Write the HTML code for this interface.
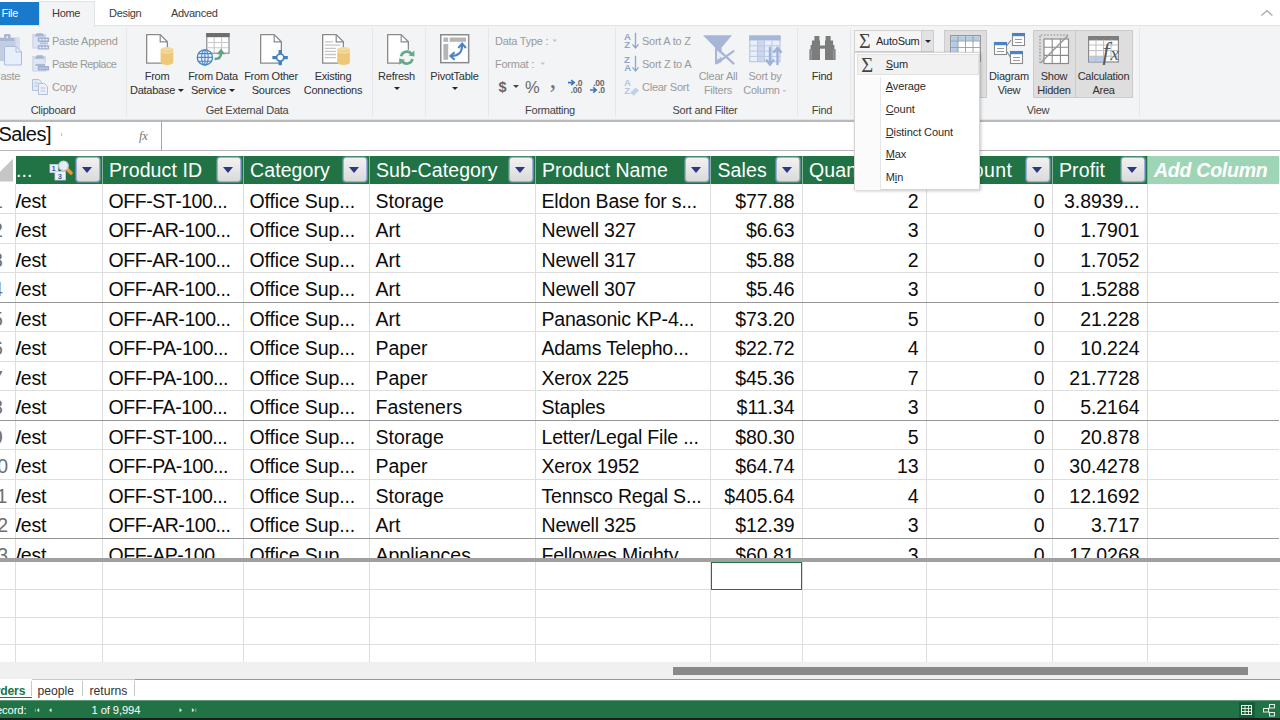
<!DOCTYPE html>
<html lang="en">
<head>
<meta charset="utf-8">
<title>Power Pivot for Excel</title>
<style>
*{box-sizing:border-box;margin:0;padding:0}
html,body{width:1280px;height:720px;overflow:hidden;background:#fff}
body{position:relative;font-family:"Liberation Sans",sans-serif;color:#262626}
.abs{position:absolute}
/* ---------- tabs ---------- */
#tabs{position:absolute;left:0;top:0;width:1280px;height:26px;background:#fff}
#tabs .tab{position:absolute;top:0;height:27px;line-height:27px;font-size:11px;letter-spacing:-.3px;color:#3b3b3b;white-space:nowrap}
#filetab{position:absolute;left:0;top:1.5px;width:38.5px;height:23.2px;background:#1979ca;color:#fff;font-size:11px;letter-spacing:-.3px;line-height:23px;padding-left:1.5px}
#hometab{position:absolute;left:38.5px;top:1px;width:56px;height:26px;background:#f3f4f6;border:1px solid #e1e2e3;border-bottom:none;z-index:3}
/* ---------- ribbon ---------- */
#ribbon{position:absolute;left:0;top:25px;width:1280px;height:94.5px;background:#f3f4f6;border-top:1px solid #e1e2e3}
#ribbon-line{position:absolute;left:0;top:119.3px;width:1280px;height:2.5px;background:linear-gradient(#e6e6e6 0,#e0e0e0 45%,#b9b9b9 50%,#b9b9b9 100%)}
.sep{position:absolute;top:28px;height:88px;width:1px;background:#e6e7e9}
.gl{position:absolute;top:103px;height:14px;line-height:14px;font-size:11px;letter-spacing:-.28px;color:#444;text-align:center;white-space:nowrap;transform:translateX(-50%)}
.bl{position:absolute;font-size:11px;letter-spacing:-.25px;line-height:14px;color:#303030;text-align:center;white-space:nowrap;transform:translateX(-50%)}
.bl.dis,.sl.dis{color:#9a9a9a}
.sl{position:absolute;font-size:11px;letter-spacing:-.25px;line-height:14px;color:#262626;white-space:nowrap}
.ico{position:absolute;overflow:visible}
.dd{display:inline-block;width:0;height:0;border-left:3px solid transparent;border-right:3px solid transparent;border-top:3.5px solid #262626;vertical-align:middle;margin-left:3px;margin-bottom:1px}
.dd.dis{border-top-color:#b5b5b5}
.ddc{position:absolute;width:0;height:0;border-left:3px solid transparent;border-right:3px solid transparent;border-top:3.5px solid #262626}
/* ---------- formula bar ---------- */
#fbar{position:absolute;left:0;top:121.5px;width:1280px;height:29.5px;background:#fff;border-bottom:1.2px solid #b9b9b9}
#namebox{position:absolute;left:-1.6px;top:122.4px;font-size:20px;line-height:24px;color:#111;letter-spacing:-.5px}
#fx{position:absolute;left:139px;top:127.5px;font-family:"Liberation Serif",serif;font-style:italic;font-size:12.5px;color:#777;line-height:16px;letter-spacing:-.3px}
#fbar-div{position:absolute;left:160.8px;top:121.5px;width:1.2px;height:29px;background:#a6a6a6}
/* ---------- grid ---------- */
#grid{position:absolute;left:0;top:152px;width:1280px;height:510px;background:#fff;overflow:hidden}
.hc{position:absolute;top:155.5px;height:28.5px;background:#217346;color:#fff;font-size:19.5px;letter-spacing:.1px;line-height:28.5px;white-space:nowrap;overflow:hidden}
.hc .ht{position:absolute;left:7px;top:0}
.hc.add{background:#9fd5b7;border-right:none;font-style:italic;font-weight:bold;letter-spacing:-.25px}
.fb{position:absolute;right:2px;top:1.8px;width:24px;height:24.4px;border:1.2px solid #9fade0;border-radius:2.8px;background:linear-gradient(#f1f1f1,#e6e6e6 50%,#dadada);box-shadow:0 0 0 .6px rgba(190,200,235,.55)}
.fb i{position:absolute;left:5.4px;top:9px;width:0;height:0;border-left:5.3px solid transparent;border-right:5.3px solid transparent;border-top:6.2px solid #2c3787}
.row{position:absolute;left:0;width:1279px;height:29.5px;border-bottom:1px solid #dedede}
.row .c{position:absolute;top:0;height:29.5px;line-height:32.4px;font-size:19.5px;letter-spacing:-.25px;color:#0c0c0c;white-space:nowrap;overflow:hidden;padding-left:6.5px}
.row .c.r{text-align:right;padding-left:0;padding-right:7.5px;letter-spacing:-.05px}
.row .c.west{padding-left:0;text-indent:-13px}
.row .rn{position:absolute;left:-20.8px;width:36.3px;top:0;height:28.5px;line-height:32.4px;background:#fff;text-align:center;font-size:19.5px;letter-spacing:-.2px;color:#6f6f6f;overflow:hidden}
.vl{position:absolute;top:184px;width:1px;height:478px;background:#dedede}
.hl{position:absolute;left:0;width:1279px;height:1px;background:#dedede}
.gb{position:absolute;left:0;width:1279px;height:1.3px;background:#969696}
</style>
<style>
/* ---------- menu ---------- */
#menu{position:absolute;left:854.2px;top:52.3px;width:126.3px;height:138px;background:#fff;border:1px solid #d4d4d4;box-shadow:1px 1px 3px rgba(0,0,0,.22);z-index:20}
#menu .mi{position:absolute;left:1.5px;width:122.3px;height:21.5px;font-size:11px;letter-spacing:-.08px;line-height:21px;color:#2b2b2b;white-space:nowrap}
#menu .mi.hot{background:#f1f1f1;border:1px solid #e0e0e0}
#menu .mt{position:absolute;left:29px;top:0}
#menu .mi.hot .mt{left:28px;top:-1px}
#menu .sig{position:absolute;left:3.5px;top:-1px;font-size:20.5px;line-height:22px;color:#444;font-family:"Liberation Serif",serif}
#menu .gut{position:absolute;left:0;top:23.5px;width:25.6px;height:113px;background:#fbfbfb;border-right:1px solid #e6e6e6}
/* ---------- footer ---------- */
#hscroll{position:absolute;left:0;top:662px;width:1280px;height:17.5px;background:#f0f0f0}
#thumb{position:absolute;left:673px;top:5px;width:575px;height:7.5px;background:#898989}
#sheetbar{position:absolute;left:0;top:679px;width:1280px;height:21px;background:#fff}
#sheetbar .tl{position:absolute;top:0;height:1.2px}
#sheetbar .st{position:absolute;top:3px;height:18px;line-height:18px;font-size:12.2px;color:#333;white-space:nowrap}
#sheetbar .st.act{left:-11.5px;width:43px;top:0;height:19.2px;line-height:25.5px;padding-left:0;letter-spacing:-.2px;background:#fff;color:#217346;font-weight:bold;border-bottom:1.5px solid #217346}
#sheetbar .stsep{position:absolute;top:2px;width:1px;height:15px;background:#c8c8c8}
#status{position:absolute;left:0;top:700px;width:1280px;height:17.5px;background:#217346;border-top:1px solid #5d9c79}
#status .sx{position:absolute;top:1.5px;font-size:11.2px;letter-spacing:-.1px;line-height:14px;color:#fff;white-space:nowrap}
#bottomline{position:absolute;left:0;top:717.5px;width:1280px;height:3px;background:#1c1c1c}
</style>
</head>
<body>
<div id="tabs">
  <div id="filetab">File</div>
  <div id="hometab"></div>
  <div class="tab" style="left:52px;z-index:4">Home</div>
  <div class="tab" style="left:109px">Design</div>
  <div class="tab" style="left:171px">Advanced</div>
  <svg class="ico" style="left:1260px;top:9px" width="14" height="8" viewBox="0 0 14 8"><path d="M1.4 6.6 L6.9 1.7 L12.4 6.6" fill="none" stroke="#acacac" stroke-width="1.3"/></svg>
</div>
<div id="ribbon"></div>
<div id="ribbon-line"></div>

<!-- ===== Clipboard ===== -->
<svg class="ico" style="left:-8px;top:33px" width="32" height="34" viewBox="0 0 32 34"><rect x="0" y="4.5" width="27.5" height="23.5" rx="1" fill="#c4cee3"/><rect x="23.5" y="4.5" width="4" height="23.5" fill="#d6ddec"/><rect x="0" y="5" width="22" height="3" fill="#aab7d4"/><rect x="12" y="1" width="6.5" height="6" rx="1.2" fill="#aab7d4"/><circle cx="15.2" cy="4.2" r="1" fill="#e9eef8"/><path d="M12.5 13.5 H24 L29.5 19 V32 H12.5 Z" fill="#e8effc" stroke="#aebcdc" stroke-width="1"/><path d="M24 13.5 V19 H29.5" fill="none" stroke="#aebcdc" stroke-width="1"/></svg>
<div class="bl dis" style="left:6.8px;top:69px">Paste</div>

<svg class="ico" style="left:32px;top:33px" width="18" height="17" viewBox="0 0 18 17"><rect x=".2" y="1" width="13.8" height="14.6" fill="#ced8ea"/><rect x="1.6" y="3.4" width="11" height="11" fill="#dde4f2"/><path d="M3 3.6 L4.6 .3 H10.8 L12.4 3.6 Z" fill="#a7b5d3"/><rect x="5.8" y="4.6" width="11.3" height="4.3" rx=".6" fill="#9fb0d3"/><rect x="8" y="9.4" width="8" height="2" fill="#b9c6e0"/><rect x="5.8" y="12.2" width="11.3" height="4.4" rx=".6" fill="#9fb0d3"/><path d="M7.4 6.75h2M10.5 6.75h2M13.6 6.75h2M7.4 14.4h2M10.5 14.4h2M13.6 14.4h2" stroke="#eef2fa" stroke-width="1.5"/></svg>
<div class="sl dis" style="left:52px;top:34px">Paste Append</div>
<svg class="ico" style="left:32px;top:55px" width="18" height="17" viewBox="0 0 18 17"><rect x=".2" y="1" width="13.8" height="15.6" fill="#ced8ea"/><rect x="1.6" y="3.6" width="11" height="12" fill="#dde4f2"/><path d="M3 3.8 L4.6 .3 H10.8 L12.4 3.8 Z" fill="#a7b5d3"/><rect x="2.9" y="8.2" width="10.6" height="3.4" fill="#aab9d7" stroke="#eef2fa" stroke-width=".9"/><rect x="5.8" y="11" width="11.3" height="4.6" rx=".6" fill="#9fb0d3"/><path d="M7.4 13.3h2M10.5 13.3h2M13.6 13.3h2" stroke="#c9d3e8" stroke-width="1.6"/></svg>
<div class="sl dis" style="left:52px;top:57px;letter-spacing:-.55px">Paste Replace</div>
<svg class="ico" style="left:32px;top:79px" width="17" height="16" viewBox="0 0 17 16">
  <path d="M0.5 0.5 H7 L9.5 3 V11.5 H0.5 Z" fill="#e3e9f5" stroke="#b3c0da"/>
  <path d="M6.5 4.5 H12.5 L15.5 7.5 V15.5 H6.5 Z" fill="#eef2fa" stroke="#b3c0da"/>
  <path d="M2.5 4h3M2.5 7h3M8.5 9h5M8.5 12h5" stroke="#b3c0da" stroke-width="1"/>
</svg>
<div class="sl dis" style="left:52px;top:80px">Copy</div>
<div class="gl" style="left:53px">Clipboard</div>
<div class="sep" style="left:126px"></div>

<!-- ===== Get External Data ===== -->
<svg class="ico" style="left:146.4px;top:34px" width="30" height="33" viewBox="0 0 30 33"><path d="M.65 .65 H14.2 L21.35 7.8 V29.2 H.65 Z" fill="#fff" stroke="#8a8a8a" stroke-width="1.3" stroke-linejoin="round"/><path d="M14.2 .65 V7.8 H21.35" fill="none" stroke="#8a8a8a" stroke-width="1.2"/><path d="M14.6 15.2 V28.8 A6.3500000000000005 2.2 0 0 0 27.3 28.8 V15.2 Z" fill="#eec878"/><ellipse cx="20.95" cy="15.2" rx="6.3500000000000005" ry="2.2" fill="#f4d998"/><path d="M14.6 16.8 A6.3500000000000005 2.2 0 0 0 27.3 16.8" fill="none" stroke="#f9ebc8" stroke-width=".8"/></svg>
<div class="bl" style="left:157px;top:69px">From</div>
<div class="bl" style="left:157px;top:83px">Database<i class="dd"></i></div>

<svg class="ico" style="left:196px;top:33px" width="34" height="34" viewBox="0 0 34 34"><rect x="10.8" y="0.6" width="22.2" height="19.6" fill="#fff" stroke="#8c8c8c" stroke-width="1.2"/><rect x="10.2" y="0" width="23.4" height="4.2" fill="#6e6e6e"/><path d="M11.4 9.5h21M11.4 14.8h21M18.2 4.2v15.4M25.6 4.2v15.4" stroke="#c9c9c9" stroke-width="1.1"/><circle cx="8.9" cy="24.4" r="7.6" fill="#eef3fb" stroke="#4a86c8" stroke-width="1.3"/><ellipse cx="8.9" cy="24.4" rx="3.3" ry="7.6" fill="none" stroke="#4a86c8" stroke-width="1.1"/><path d="M1.3 24.4h15.2M2.5 20.6h12.8M2.5 28.2h12.8M8.9 16.8v15.2" stroke="#4a86c8" stroke-width="1.1"/><path d="M18.6 26 C23 26 25 24 25 20.5" fill="none" stroke="#5fa585" stroke-width="2.5"/><path d="M20.8 21.2 L25 15.4 L29.2 21.2 Z" fill="#5fa585"/></svg>
<div class="bl" style="left:213px;top:69px">From Data</div>
<div class="bl" style="left:213px;top:83px">Service<i class="dd"></i></div>

<svg class="ico" style="left:259.9px;top:34px" width="30" height="33" viewBox="0 0 30 33"><path d="M.65 .65 H14.2 L21.35 7.8 V29.2 H.65 Z" fill="#fff" stroke="#8a8a8a" stroke-width="1.3" stroke-linejoin="round"/><path d="M14.2 .65 V7.8 H21.35" fill="none" stroke="#8a8a8a" stroke-width="1.2"/><g fill="#3f7fc1"><rect x="18.6" y="16" width="3.2" height="4"/><rect x="18.6" y="27.2" width="3.2" height="4"/><rect x="12.4" y="22" width="4" height="3.2"/><rect x="23.8" y="22" width="4" height="3.2"/></g><circle cx="20.2" cy="23.6" r="3.6" fill="#fff" stroke="#3f7fc1" stroke-width="1.7"/></svg>
<div class="bl" style="left:271px;top:69px">From Other</div>
<div class="bl" style="left:271px;top:83px">Sources</div>

<svg class="ico" style="left:322px;top:34px" width="30" height="33" viewBox="0 0 30 33"><path d="M.65 .65 H14.2 L21.35 7.8 V29.2 H.65 Z" fill="#fff" stroke="#8a8a8a" stroke-width="1.3" stroke-linejoin="round"/><path d="M14.2 .65 V7.8 H21.35" fill="none" stroke="#8a8a8a" stroke-width="1.2"/><path d="M2.8 7.8h8.2M2.8 11.2h15.5M2.8 14.4h11.2M2.8 17.4h11.2M2.8 20.5h11.2M2.8 23.7h11.2" stroke="#c6c6c6" stroke-width="1.3"/><path d="M15.2 15.2 V28.8 A6.35 2.2 0 0 0 27.9 28.8 V15.2 Z" fill="#eec878"/><ellipse cx="21.549999999999997" cy="15.2" rx="6.35" ry="2.2" fill="#f4d998"/><path d="M15.2 16.8 A6.35 2.2 0 0 0 27.9 16.8" fill="none" stroke="#f9ebc8" stroke-width=".8"/></svg>
<div class="bl" style="left:333px;top:69px">Existing</div>
<div class="bl" style="left:333px;top:83px">Connections</div>
<div class="gl" style="left:247px">Get External Data</div>
<div class="sep" style="left:372px"></div>

<!-- ===== Refresh ===== -->
<svg class="ico" style="left:386.6px;top:34px" width="30" height="33" viewBox="0 0 30 33"><path d="M.65 .65 H14.2 L21.35 7.8 V29.2 H.65 Z" fill="#fff" stroke="#8a8a8a" stroke-width="1.3" stroke-linejoin="round"/><path d="M14.2 .65 V7.8 H21.35" fill="none" stroke="#8a8a8a" stroke-width="1.2"/><circle cx="19.8" cy="23.6" r="8" fill="#f3f4f6"/><g fill="none" stroke="#66a98a" stroke-width="2.6"><path d="M14.1 22.2 A5.8 5.8 0 0 1 24.6 20.2"/><path d="M25.5 25 A5.8 5.8 0 0 1 15 27"/></g><path d="M21.6 21.4 L27.4 16.4 L27.4 22.6 Z" fill="#66a98a"/><path d="M18 25.8 L12.2 30.8 L12.2 24.6 Z" fill="#66a98a"/></svg>
<div class="bl" style="left:396.5px;top:69px">Refresh</div>
<i class="ddc" style="left:393.5px;top:87.2px"></i>
<div class="sep" style="left:425px"></div>

<!-- ===== PivotTable ===== -->
<svg class="ico" style="left:440.1px;top:34px" width="30" height="30" viewBox="0 0 30 30"><rect x=".75" y=".75" width="27.9" height="27.9" fill="#fff" stroke="#8a8a8a" stroke-width="1.5"/><rect x="3.4" y="3.5" width="4.8" height="4.3" fill="#b5b5b5"/><rect x="9.7" y="3.5" width="16.3" height="4.3" fill="#b5b5b5"/><rect x="3.4" y="10" width="4.8" height="15.8" fill="#b5b5b5"/><g fill="none" stroke="#4a84c2" stroke-width="2.1"><path d="M11.5 22 C18.5 22 22.1 18.5 22.1 11"/><path d="M18.3 14 L22.1 9.6 L25.9 14"/><path d="M14.6 18.2 L10.4 22 L14.6 25.8"/></g></svg>
<div class="bl" style="left:454.5px;top:69px">PivotTable</div>
<i class="ddc" style="left:451.5px;top:87.2px"></i>
<div class="sep" style="left:488px"></div>

<!-- ===== Formatting ===== -->
<div class="sl dis" style="left:495px;top:34px">Data Type :</div><svg class="ico" style="left:552px;top:39px" width="6" height="4" viewBox="0 0 6 4"><path d="M.4 .4h4.6L2.7 2.9z" fill="#c4c4c4"/></svg>
<div class="sl dis" style="left:495px;top:57px">Format :</div><svg class="ico" style="left:540px;top:62px" width="6" height="4" viewBox="0 0 6 4"><path d="M.4 .4h4.6L2.7 2.9z" fill="#c4c4c4"/></svg>
<div class="sl" style="left:498.6px;top:77.5px;font-size:14.5px;line-height:18px;color:#676767;font-weight:bold;letter-spacing:0">$</div>
<i class="ddc" style="left:513px;top:85px;border-top-color:#444"></i>
<div class="sl" style="left:525px;top:76.5px;font-size:16.5px;line-height:20px;color:#6a6a6a;letter-spacing:0">%</div>
<div class="sl" style="left:549.5px;top:64px;font-size:27px;line-height:30px;color:#757575;font-family:'Liberation Serif',serif;letter-spacing:0">,</div>
<svg class="ico" style="left:567px;top:79px" width="19" height="15" viewBox="0 0 19 15"><path d="M1 3.6h5.6M4.2 1 L7.2 3.6 L4.2 6.2" fill="none" stroke="#3b78b8" stroke-width="1.6"/><text x="8.6" y="7" font-family="Liberation Sans,sans-serif" font-size="8.6" font-weight="bold" fill="#686868" letter-spacing="-.3">.0</text><text x="3.6" y="14.2" font-family="Liberation Sans,sans-serif" font-size="8.6" font-weight="bold" fill="#686868" letter-spacing="-.3">.00</text></svg>
<svg class="ico" style="left:589px;top:79px" width="19" height="15" viewBox="0 0 19 15"><text x="4.2" y="7" font-family="Liberation Sans,sans-serif" font-size="8.6" font-weight="bold" fill="#686868" letter-spacing="-.3">.00</text><path d="M1 11h5.6M4.2 8.4 L7.2 11 L4.2 13.6" fill="none" stroke="#3b78b8" stroke-width="1.6"/><text x="9.2" y="14.2" font-family="Liberation Sans,sans-serif" font-size="8.6" font-weight="bold" fill="#686868" letter-spacing="-.3">.0</text></svg>
<div class="gl" style="left:550px">Formatting</div>
<div class="sep" style="left:615px"></div>
<!-- ===== Sort and Filter ===== -->
<svg class="ico" style="left:623px;top:32.4px" width="17" height="18" viewBox="0 0 17 18"><text x="1" y="7.6" font-family="Liberation Sans,sans-serif" font-size="9.6" font-weight="bold" fill="#8fa5cc">A</text><text x="1.3" y="16.4" font-family="Liberation Sans,sans-serif" font-size="9.6" font-weight="bold" fill="#8fa5cc">Z</text><path d="M12.5 .8 V15.6 M9.5 12.4 L12.5 15.9 L15.5 12.4" fill="none" stroke="#8fa5cc" stroke-width="1.3"/></svg>
<div class="sl dis" style="left:642px;top:34px">Sort A to Z</div>
<svg class="ico" style="left:623px;top:55.2px" width="17" height="18" viewBox="0 0 17 18"><text x="1" y="7.6" font-family="Liberation Sans,sans-serif" font-size="9.6" font-weight="bold" fill="#8fa5cc">Z</text><text x="1.3" y="16.4" font-family="Liberation Sans,sans-serif" font-size="9.6" font-weight="bold" fill="#8fa5cc">A</text><path d="M12.5 .8 V15.6 M9.5 12.4 L12.5 15.9 L15.5 12.4" fill="none" stroke="#8fa5cc" stroke-width="1.3"/></svg>
<div class="sl dis" style="left:642px;top:57px">Sort Z to A</div>
<svg class="ico" style="left:623px;top:77.6px" width="17" height="18" viewBox="0 0 17 18"><text x="1" y="7.6" font-family="Liberation Sans,sans-serif" font-size="9.6" font-weight="bold" fill="#b7c5e1">A</text><text x="1.3" y="16.4" font-family="Liberation Sans,sans-serif" font-size="9.6" font-weight="bold" fill="#b7c5e1">Z</text><path d="M7.2 14.8 L12.6 9.4 L16 12.4 L10.6 17.8 Z" fill="#c3cfe6"/></svg>
<div class="sl dis" style="left:642px;top:80px">Clear Sort</div>

<svg class="ico" style="left:702px;top:34px" width="34" height="32" viewBox="0 0 34 32"><path d="M1 1.2 H30 L19.6 13.6 V28 L13 30.4 V13.6 Z" fill="#a6b6d7"/><path d="M15 16.2 V26 L21.8 21.2 Z" fill="#f3f4f6" opacity=".85"/><path d="M16 15.4 L32.2 30.2 M32.2 16.6 L14.2 29.6" stroke="#a6b6d7" stroke-width="2.3" fill="none"/></svg>
<div class="bl dis" style="left:718px;top:69px">Clear All</div>
<div class="bl dis" style="left:718px;top:83px">Filters</div>

<svg class="ico" style="left:749px;top:35px" width="34" height="32" viewBox="0 0 34 32"><rect x=".75" y="1" width="30.25" height="25.75" fill="#e8effb"/><rect x="8.5" y="5.4" width="7" height="21.3" fill="#cbd7ed"/><path d="M.75 10.8h30.2M.75 16.1h30.2M.75 21.4h30.2M8.5 5.4v21.3M15.5 5.4v21.3M23 5.4v21.3" stroke="#bac8e3" stroke-width="1"/><rect x=".75" y="1" width="30.25" height="25.75" fill="none" stroke="#b3c2df" stroke-width="1"/><rect x=".25" y=".5" width="31.25" height="4.9" fill="#a6b6d7"/><path d="M21 11.8 V28.6 M17 24.6 L21 29.6 L25 24.6" fill="none" stroke="#9fb1d5" stroke-width="2.4"/><path d="M28.5 30 V14 M24.5 17.8 L28.5 12.8 L32.5 17.8" fill="none" stroke="#9fb1d5" stroke-width="2.4"/></svg>
<div class="bl dis" style="left:765px;top:69px">Sort by</div>
<div class="bl dis" style="left:765px;top:83px">Column<i class="dd dis" style="border-width:2.5px 2.5px 0 2.5px;border-top:2.5px solid #c5c5c5"></i></div>
<div class="gl" style="left:705px">Sort and Filter</div>
<div class="sep" style="left:797px"></div>

<!-- ===== Find ===== -->
<svg class="ico" style="left:808px;top:35px" width="29" height="26" viewBox="0 0 29 26"><path d="M6.4 1 H11.4 V5.5 H12 V24.9 H1.4 V14.25 H2.6 V10 H3.9 V5.5 H6.4 Z" fill="#7c7c7c"/><path d="M22.6 1 H17.6 V5.5 H17 V24.9 H27.6 V14.25 H26.4 V10 H25.1 V5.5 H22.6 Z" fill="#7c7c7c"/><rect x="11.8" y="10.5" width="5.4" height="3.2" fill="#7c7c7c"/><path d="M3.2 15v9.5M25.8 15v9.5" stroke="#a9a9a9" stroke-width=".9"/></svg>
<div class="bl" style="left:822px;top:69px">Find</div>
<div class="gl" style="left:822px">Find</div>
<div class="sep" style="left:850px"></div>

<!-- ===== Calculations / AutoSum ===== -->
<div class="abs" style="left:854px;top:29.5px;width:80px;height:22.5px;border:1px solid #d2d2d2;background:#f6f6f6"></div>
<div class="abs" style="left:921px;top:29.5px;width:13px;height:22.5px;border:1px solid #cdcdcd;background:#e2e2e2"></div>
<i class="ddc" style="left:925px;top:40px"></i>
<div class="sl" style="left:859px;top:29.5px;font-size:20px;line-height:22px;color:#444;font-family:'Liberation Serif',serif;letter-spacing:0">&#931;</div>
<div class="sl" style="left:876px;top:34px">AutoSum</div>

<!-- ===== View ===== -->
<div class="abs" style="left:944px;top:29.5px;width:43px;height:68.5px;background:#dedede;border:1px solid #cbcbcb"></div>
<svg class="ico" style="left:950px;top:35px" width="32" height="28" viewBox="0 0 32 28">
  <rect x="0.7" y="0.7" width="29.6" height="25.6" fill="#fff" stroke="#8f8f8f" stroke-width="1.2"/>
  <rect x="1.4" y="1.4" width="28.2" height="4.4" fill="#b4cbea"/><rect x="1.4" y="5.8" width="6.6" height="13.2" fill="#b4cbea"/>
  <path d="M1 6h29M1 12.5h29M1 19h29M8 1v25M15.5 1v25M23 1v25" stroke="#9c9c9c" stroke-width=".9"/>
</svg>
<svg class="ico" style="left:994px;top:32px" width="32" height="36" viewBox="0 0 32 36">
  <path d="M11 16 L17 8 M11 17 L17 26" stroke="#8a8a8a" stroke-width="1.2"/>
  <g fill="#fff" stroke="#8a8a8a" stroke-width="1.1">
   <rect x="18.5" y="1.5" width="12" height="12"/><rect x="0.5" y="10.5" width="12" height="12"/><rect x="16.5" y="19.5" width="12" height="12"/>
  </g>
  <rect x="18" y="1" width="13" height="3.2" fill="#4b82c4"/><rect x="0" y="10" width="13" height="3.2" fill="#4b82c4"/><rect x="16" y="19" width="13" height="3.2" fill="#4b82c4"/>
  <path d="M21 7.5h7M21 10.5h7M3 16.5h7M3 19.5h7M19 25.5h7M19 28.5h7" stroke="#9a9a9a" stroke-width="1"/>
</svg>
<div class="bl" style="left:1009px;top:69px">Diagram</div>
<div class="bl" style="left:1009px;top:83px">View</div>

<div class="abs" style="left:1033px;top:29.5px;width:43px;height:68.5px;background:#dedede;border:1px solid #cbcbcb"></div>
<svg class="ico" style="left:1039px;top:34px" width="31" height="31" viewBox="0 0 31 31">
  <rect x="5" y="5" width="24.5" height="24.5" fill="#fff" stroke="#8a8a8a" stroke-width="1.2"/>
  <path d="M5 13.2h24.5M5 21.4h24.5M13.2 5v24.5M21.4 5v24.5" stroke="#8a8a8a" stroke-width="1.1"/>
  <path d="M1 29 V1 H29" fill="none" stroke="#8a8a8a" stroke-width="1.2" stroke-dasharray="1.6 1.6"/>
  <path d="M1.5 29 L29 1.5" stroke="#9a9a9a" stroke-width="1.6"/>
</svg>
<div class="bl" style="left:1054px;top:69px">Show</div>
<div class="bl" style="left:1054px;top:83px">Hidden</div>

<div class="abs" style="left:1075px;top:29.5px;width:58px;height:68.5px;background:#dedede;border:1px solid #cbcbcb"></div>
<svg class="ico" style="left:1088px;top:36px" width="34" height="30" viewBox="0 0 34 30">
  <rect x="0.6" y="0.6" width="29.8" height="25.4" fill="#fff" stroke="#8a8a8a" stroke-width="1.2"/>
  <rect x="0" y="0" width="31" height="4.4" fill="#7d7d7d"/>
  <rect x="1.2" y="20.4" width="14" height="5" fill="#b5cdee"/>
  <path d="M1 9h29M1 14.6h29M1 20.2h29M8 3.6v22.4M15.5 3.6v22.4M23 3.6v22.4" stroke="#bdbdbd" stroke-width="1"/>
  <rect x="16" y="4" width="18" height="24" fill="#dddddd" opacity="0"/>
  <text x="14.5" y="23.5" font-family="Liberation Serif,serif" font-style="italic" font-size="25" fill="#5a5a5a">f</text>
  <text x="22.5" y="23.5" font-family="Liberation Serif,serif" font-style="italic" font-size="19" fill="#5a5a5a">x</text>
</svg>
<div class="bl" style="left:1103.5px;top:69px">Calculation</div>
<div class="bl" style="left:1103.5px;top:83px">Area</div>
<div class="gl" style="left:1038px">View</div>
<div class="sep" style="left:1139px"></div>
<div id="fbar"></div><div id="namebox">Sales]</div><div id="fx">fx</div><div class="abs" style="left:61px;top:133px;width:1px;height:3px;background:#bdbdbd"></div><div id="fbar-div"></div>
<!-- grid -->

<div class="row" style="top:184.60px">
<span class="c west" style="left:16px;width:86px">West</span>
<span class="c" style="left:102px;width:141px;letter-spacing:-.45px">OFF-ST-100...</span>
<span class="c" style="left:243px;width:126px;letter-spacing:-.1px">Office Sup...</span>
<span class="c" style="left:369px;width:166px;letter-spacing:0px">Storage</span>
<span class="c" style="left:535px;width:175.5px;letter-spacing:-.2px">Eldon Base for s...</span>
<span class="c r" style="left:710.5px;width:91.5px">$77.88</span>
<span class="c r" style="left:802px;width:124px">2</span>
<span class="c r" style="left:926px;width:126px">0</span>
<span class="c r" style="left:1052px;width:95px">3.8939...</span>
<span class="rn">1</span>
</div>
<div class="row" style="top:214.10px">
<span class="c west" style="left:16px;width:86px">West</span>
<span class="c" style="left:102px;width:141px;letter-spacing:-.45px">OFF-AR-100...</span>
<span class="c" style="left:243px;width:126px;letter-spacing:-.1px">Office Sup...</span>
<span class="c" style="left:369px;width:166px;letter-spacing:0px">Art</span>
<span class="c" style="left:535px;width:175.5px;letter-spacing:-.2px">Newell 327</span>
<span class="c r" style="left:710.5px;width:91.5px">$6.63</span>
<span class="c r" style="left:802px;width:124px">3</span>
<span class="c r" style="left:926px;width:126px">0</span>
<span class="c r" style="left:1052px;width:95px">1.7901</span>
<span class="rn">2</span>
</div>
<div class="row" style="top:243.60px">
<span class="c west" style="left:16px;width:86px">West</span>
<span class="c" style="left:102px;width:141px;letter-spacing:-.45px">OFF-AR-100...</span>
<span class="c" style="left:243px;width:126px;letter-spacing:-.1px">Office Sup...</span>
<span class="c" style="left:369px;width:166px;letter-spacing:0px">Art</span>
<span class="c" style="left:535px;width:175.5px;letter-spacing:-.2px">Newell 317</span>
<span class="c r" style="left:710.5px;width:91.5px">$5.88</span>
<span class="c r" style="left:802px;width:124px">2</span>
<span class="c r" style="left:926px;width:126px">0</span>
<span class="c r" style="left:1052px;width:95px">1.7052</span>
<span class="rn">3</span>
</div>
<div class="row" style="top:273.10px">
<span class="c west" style="left:16px;width:86px">West</span>
<span class="c" style="left:102px;width:141px;letter-spacing:-.45px">OFF-AR-100...</span>
<span class="c" style="left:243px;width:126px;letter-spacing:-.1px">Office Sup...</span>
<span class="c" style="left:369px;width:166px;letter-spacing:0px">Art</span>
<span class="c" style="left:535px;width:175.5px;letter-spacing:-.2px">Newell 307</span>
<span class="c r" style="left:710.5px;width:91.5px">$5.46</span>
<span class="c r" style="left:802px;width:124px">3</span>
<span class="c r" style="left:926px;width:126px">0</span>
<span class="c r" style="left:1052px;width:95px">1.5288</span>
<span class="rn">4</span>
</div>
<div class="row" style="top:302.60px">
<span class="c west" style="left:16px;width:86px">West</span>
<span class="c" style="left:102px;width:141px;letter-spacing:-.45px">OFF-AR-100...</span>
<span class="c" style="left:243px;width:126px;letter-spacing:-.1px">Office Sup...</span>
<span class="c" style="left:369px;width:166px;letter-spacing:0px">Art</span>
<span class="c" style="left:535px;width:175.5px;letter-spacing:-.2px">Panasonic KP-4...</span>
<span class="c r" style="left:710.5px;width:91.5px">$73.20</span>
<span class="c r" style="left:802px;width:124px">5</span>
<span class="c r" style="left:926px;width:126px">0</span>
<span class="c r" style="left:1052px;width:95px">21.228</span>
<span class="rn">5</span>
</div>
<div class="row" style="top:332.10px">
<span class="c west" style="left:16px;width:86px">West</span>
<span class="c" style="left:102px;width:141px;letter-spacing:-.45px">OFF-PA-100...</span>
<span class="c" style="left:243px;width:126px;letter-spacing:-.1px">Office Sup...</span>
<span class="c" style="left:369px;width:166px;letter-spacing:0px">Paper</span>
<span class="c" style="left:535px;width:175.5px;letter-spacing:-.2px">Adams Telepho...</span>
<span class="c r" style="left:710.5px;width:91.5px">$22.72</span>
<span class="c r" style="left:802px;width:124px">4</span>
<span class="c r" style="left:926px;width:126px">0</span>
<span class="c r" style="left:1052px;width:95px">10.224</span>
<span class="rn">6</span>
</div>
<div class="row" style="top:361.60px">
<span class="c west" style="left:16px;width:86px">West</span>
<span class="c" style="left:102px;width:141px;letter-spacing:-.45px">OFF-PA-100...</span>
<span class="c" style="left:243px;width:126px;letter-spacing:-.1px">Office Sup...</span>
<span class="c" style="left:369px;width:166px;letter-spacing:0px">Paper</span>
<span class="c" style="left:535px;width:175.5px;letter-spacing:-.2px">Xerox 225</span>
<span class="c r" style="left:710.5px;width:91.5px">$45.36</span>
<span class="c r" style="left:802px;width:124px">7</span>
<span class="c r" style="left:926px;width:126px">0</span>
<span class="c r" style="left:1052px;width:95px">21.7728</span>
<span class="rn">7</span>
</div>
<div class="row" style="top:391.10px">
<span class="c west" style="left:16px;width:86px">West</span>
<span class="c" style="left:102px;width:141px;letter-spacing:-.45px">OFF-FA-100...</span>
<span class="c" style="left:243px;width:126px;letter-spacing:-.1px">Office Sup...</span>
<span class="c" style="left:369px;width:166px;letter-spacing:0px">Fasteners</span>
<span class="c" style="left:535px;width:175.5px;letter-spacing:-.2px">Staples</span>
<span class="c r" style="left:710.5px;width:91.5px">$11.34</span>
<span class="c r" style="left:802px;width:124px">3</span>
<span class="c r" style="left:926px;width:126px">0</span>
<span class="c r" style="left:1052px;width:95px">5.2164</span>
<span class="rn">8</span>
</div>
<div class="row" style="top:420.60px">
<span class="c west" style="left:16px;width:86px">West</span>
<span class="c" style="left:102px;width:141px;letter-spacing:-.45px">OFF-ST-100...</span>
<span class="c" style="left:243px;width:126px;letter-spacing:-.1px">Office Sup...</span>
<span class="c" style="left:369px;width:166px;letter-spacing:0px">Storage</span>
<span class="c" style="left:535px;width:175.5px;letter-spacing:-.2px">Letter/Legal File ...</span>
<span class="c r" style="left:710.5px;width:91.5px">$80.30</span>
<span class="c r" style="left:802px;width:124px">5</span>
<span class="c r" style="left:926px;width:126px">0</span>
<span class="c r" style="left:1052px;width:95px">20.878</span>
<span class="rn">9</span>
</div>
<div class="row" style="top:450.10px">
<span class="c west" style="left:16px;width:86px">West</span>
<span class="c" style="left:102px;width:141px;letter-spacing:-.45px">OFF-PA-100...</span>
<span class="c" style="left:243px;width:126px;letter-spacing:-.1px">Office Sup...</span>
<span class="c" style="left:369px;width:166px;letter-spacing:0px">Paper</span>
<span class="c" style="left:535px;width:175.5px;letter-spacing:-.2px">Xerox 1952</span>
<span class="c r" style="left:710.5px;width:91.5px">$64.74</span>
<span class="c r" style="left:802px;width:124px">13</span>
<span class="c r" style="left:926px;width:126px">0</span>
<span class="c r" style="left:1052px;width:95px">30.4278</span>
<span class="rn">10</span>
</div>
<div class="row" style="top:479.60px">
<span class="c west" style="left:16px;width:86px">West</span>
<span class="c" style="left:102px;width:141px;letter-spacing:-.45px">OFF-ST-100...</span>
<span class="c" style="left:243px;width:126px;letter-spacing:-.1px">Office Sup...</span>
<span class="c" style="left:369px;width:166px;letter-spacing:0px">Storage</span>
<span class="c" style="left:535px;width:175.5px;letter-spacing:-.2px">Tennsco Regal S...</span>
<span class="c r" style="left:710.5px;width:91.5px">$405.64</span>
<span class="c r" style="left:802px;width:124px">4</span>
<span class="c r" style="left:926px;width:126px">0</span>
<span class="c r" style="left:1052px;width:95px">12.1692</span>
<span class="rn">11</span>
</div>
<div class="row" style="top:509.10px">
<span class="c west" style="left:16px;width:86px">West</span>
<span class="c" style="left:102px;width:141px;letter-spacing:-.45px">OFF-AR-100...</span>
<span class="c" style="left:243px;width:126px;letter-spacing:-.1px">Office Sup...</span>
<span class="c" style="left:369px;width:166px;letter-spacing:0px">Art</span>
<span class="c" style="left:535px;width:175.5px;letter-spacing:-.2px">Newell 325</span>
<span class="c r" style="left:710.5px;width:91.5px">$12.39</span>
<span class="c r" style="left:802px;width:124px">3</span>
<span class="c r" style="left:926px;width:126px">0</span>
<span class="c r" style="left:1052px;width:95px">3.717</span>
<span class="rn">12</span>
</div>
<div class="row" style="top:538.60px">
<span class="c west" style="left:16px;width:86px">West</span>
<span class="c" style="left:102px;width:141px;letter-spacing:-.45px">OFF-AP-100...</span>
<span class="c" style="left:243px;width:126px;letter-spacing:-.1px">Office Sup...</span>
<span class="c" style="left:369px;width:166px;letter-spacing:0px">Appliances</span>
<span class="c" style="left:535px;width:175.5px;letter-spacing:-.2px">Fellowes Mighty...</span>
<span class="c r" style="left:710.5px;width:91.5px">$60.81</span>
<span class="c r" style="left:802px;width:124px">3</span>
<span class="c r" style="left:926px;width:126px">0</span>
<span class="c r" style="left:1052px;width:95px">17.0268</span>
<span class="rn">13</span>
</div>
<div class="hc" style="left:16px;width:86px"><span class="ht" style="left:0">...</span><svg class="ico" style="left:33px;top:4px" width="26" height="22" viewBox="0 0 26 22"><rect x="1" y="4.5" width="8" height="8" fill="#eef1fa" stroke="#c9cfe6" stroke-width=".8"/><rect x="6" y="11.5" width="10.5" height="8.5" fill="#eef1fa" stroke="#c9cfe6" stroke-width=".8"/><text x="2.6" y="11.2" font-family="Liberation Sans,sans-serif" font-weight="bold" font-size="7.5" fill="#3b58c4">1</text><text x="8.8" y="19" font-family="Liberation Sans,sans-serif" font-weight="bold" font-size="7.5" fill="#3b58c4">3</text><path d="M18.5 9.5 L22 13" stroke="#e39a3c" stroke-width="3.6" stroke-linecap="round"/><circle cx="14.5" cy="5.8" r="4.7" fill="#e4ecf8" stroke="#c9cdd6" stroke-width="1.4"/></svg><span class="fb"><i></i></span></div>
<div class="hc" style="left:102px;width:141px"><span class="ht" style="">Product ID</span><span class="fb"><i></i></span></div>
<div class="hc" style="left:243px;width:126px"><span class="ht" style="">Category</span><span class="fb"><i></i></span></div>
<div class="hc" style="left:369px;width:166px"><span class="ht" style="">Sub-Category</span><span class="fb"><i></i></span></div>
<div class="hc" style="left:535px;width:175.5px"><span class="ht" style="">Product Name</span><span class="fb"><i></i></span></div>
<div class="hc" style="left:710.5px;width:91.5px"><span class="ht" style="">Sales</span><span class="fb"><i></i></span></div>
<div class="hc" style="left:802px;width:124px"><span class="ht" style="">Quantity</span><span class="fb"><i></i></span></div>
<div class="hc" style="left:926px;width:126px"><span class="ht" style="letter-spacing:.45px">Discount</span><span class="fb"><i></i></span></div>
<div class="hc" style="left:1052px;width:95px"><span class="ht" style="">Profit</span><span class="fb"><i></i></span></div>
<div class="hc add" style="left:1147px;width:132px"><span class="ht">Add Column</span></div>

<div class="vl" style="left:15.0px"></div>
<div class="vl" style="left:101.5px"></div>
<div class="vl" style="left:242.5px"></div>
<div class="vl" style="left:368.5px"></div>
<div class="vl" style="left:534.5px"></div>
<div class="vl" style="left:710.0px"></div>
<div class="vl" style="left:801.5px"></div>
<div class="vl" style="left:925.5px"></div>
<div class="vl" style="left:1051.5px"></div>
<div class="vl" style="left:1146.5px"></div>
<div class="vl" style="left:101.5px;top:155.5px;height:28.5px;background:#86b69f"></div>
<div class="vl" style="left:242.5px;top:155.5px;height:28.5px;background:#86b69f"></div>
<div class="vl" style="left:368.5px;top:155.5px;height:28.5px;background:#86b69f"></div>
<div class="vl" style="left:534.5px;top:155.5px;height:28.5px;background:#86b69f"></div>
<div class="vl" style="left:710.0px;top:155.5px;height:28.5px;background:#86b69f"></div>
<div class="vl" style="left:801.5px;top:155.5px;height:28.5px;background:#86b69f"></div>
<div class="vl" style="left:925.5px;top:155.5px;height:28.5px;background:#86b69f"></div>
<div class="vl" style="left:1051.5px;top:155.5px;height:28.5px;background:#86b69f"></div>
<div class="vl" style="left:1146.5px;top:155.5px;height:28.5px;background:#86b69f"></div>
<div class="gb" style="top:301.70px"></div>
<div class="gb" style="top:419.70px"></div>
<div class="gb" style="top:537.70px"></div>
<div class="abs" style="left:0;top:558px;width:1280px;height:3.5px;background:#a0a0a0"></div>
<div class="abs" style="left:0;top:561.5px;width:1280px;height:100.5px;background:#fff"></div>
<div class="vl" style="left:15.0px;top:561.5px;height:100.5px"></div>
<div class="vl" style="left:101.5px;top:561.5px;height:100.5px"></div>
<div class="vl" style="left:242.5px;top:561.5px;height:100.5px"></div>
<div class="vl" style="left:368.5px;top:561.5px;height:100.5px"></div>
<div class="vl" style="left:534.5px;top:561.5px;height:100.5px"></div>
<div class="vl" style="left:710.0px;top:561.5px;height:100.5px"></div>
<div class="vl" style="left:801.5px;top:561.5px;height:100.5px"></div>
<div class="vl" style="left:925.5px;top:561.5px;height:100.5px"></div>
<div class="vl" style="left:1051.5px;top:561.5px;height:100.5px"></div>
<div class="vl" style="left:1146.5px;top:561.5px;height:100.5px"></div>
<div class="hl" style="top:589px"></div>
<div class="hl" style="top:616.8px"></div>
<div class="hl" style="top:644.3px"></div>
<div class="abs" style="left:710.7px;top:562px;width:91.6px;height:28px;border:1.7px solid #217346;background:#fff"></div>
<div class="abs" style="left:0;top:155.5px;width:16px;height:28.5px;background:#fff"></div>
<svg class="ico" style="left:0;top:158px" width="14" height="25" viewBox="0 0 14 25"><path d="M13 0.8 V23.6 H-10 Z" fill="#c6c6c6"/></svg>
<!-- ===== AutoSum dropdown menu ===== -->
<div id="menu">
  <div class="mi hot" style="top:0.5px"><span class="sig">&#931;</span><span class="mt"><u>S</u>um</span></div>
  <div class="gut"></div>
  <div class="mi" style="top:22.9px"><span class="mt"><u>A</u>verage</span></div>
  <div class="mi" style="top:46.1px"><span class="mt"><u>C</u>ount</span></div>
  <div class="mi" style="top:68.6px"><span class="mt"><u>D</u>istinct Count</span></div>
  <div class="mi" style="top:91.0px"><span class="mt"><u>M</u>ax</span></div>
  <div class="mi" style="top:113.5px"><span class="mt">M<u>i</u>n</span></div>
</div>

<!-- ===== bottom: scrollbar, sheet tabs, status bar ===== -->
<div id="hscroll"><div id="thumb"></div></div>
<div id="sheetbar">
  <div class="tl" style="left:31px;width:104px;background:#c9c9c9"></div><div class="tl" style="left:135px;width:1145px;background:#6fa88a"></div>
  <div class="st act">orders</div>
  <div class="st" style="left:37.5px">people</div>
  <div class="st" style="left:89.5px">returns</div>
  <div class="stsep" style="left:31px"></div><div class="stsep" style="left:82px"></div><div class="stsep" style="left:134px"></div>
</div>
<div id="status">
  <span class="sx" style="left:-12px">Record:</span>
  <span class="sx" style="left:91.5px">1 of 9,994</span>
  <svg class="ico" style="left:34px;top:6.5px" width="20" height="6" viewBox="0 0 20 6"><path d="M1.4 0.6v3.2M3 2.2l2-1.6v3.2zM15.3 2.2l2-1.6v3.2z" fill="#dcebe2" stroke="#dcebe2" stroke-width=".5"/></svg>
  <svg class="ico" style="left:178px;top:6.5px" width="22" height="6" viewBox="0 0 22 6"><path d="M1.8 0.6v3.2l2-1.6zM14.2 0.6v3.2l2-1.6zM17.8 0.6v3.2" fill="#dcebe2" stroke="#dcebe2" stroke-width=".5"/></svg>
  <div class="abs" style="left:1239px;top:1px;width:16px;height:16px;background:#185c37"></div>
  <svg class="ico" style="left:1241px;top:3.5px" width="12" height="11" viewBox="0 0 12 11"><rect x="0.5" y="0.5" width="10" height="9" fill="none" stroke="#e6f0ea"/><path d="M0.5 3.5h10M0.5 6.5h10M4 0.5v9M7.5 0.5v9" stroke="#e6f0ea" stroke-width=".9"/></svg>
  <svg class="ico" style="left:1262.5px;top:2.5px" width="13" height="13" viewBox="0 0 13 13"><g fill="none" stroke="#e6f0ea" stroke-width="1"><rect x="6.5" y="0.5" width="5" height="3.5"/><rect x="0.5" y="4.5" width="5" height="3.5"/><rect x="6.5" y="8.5" width="5" height="3.5"/><path d="M5.5 6 L6.5 2.5M5.5 6.5L6.5 10"/></g></svg>
</div>
<div id="bottomline"></div>
</body>
</html>
